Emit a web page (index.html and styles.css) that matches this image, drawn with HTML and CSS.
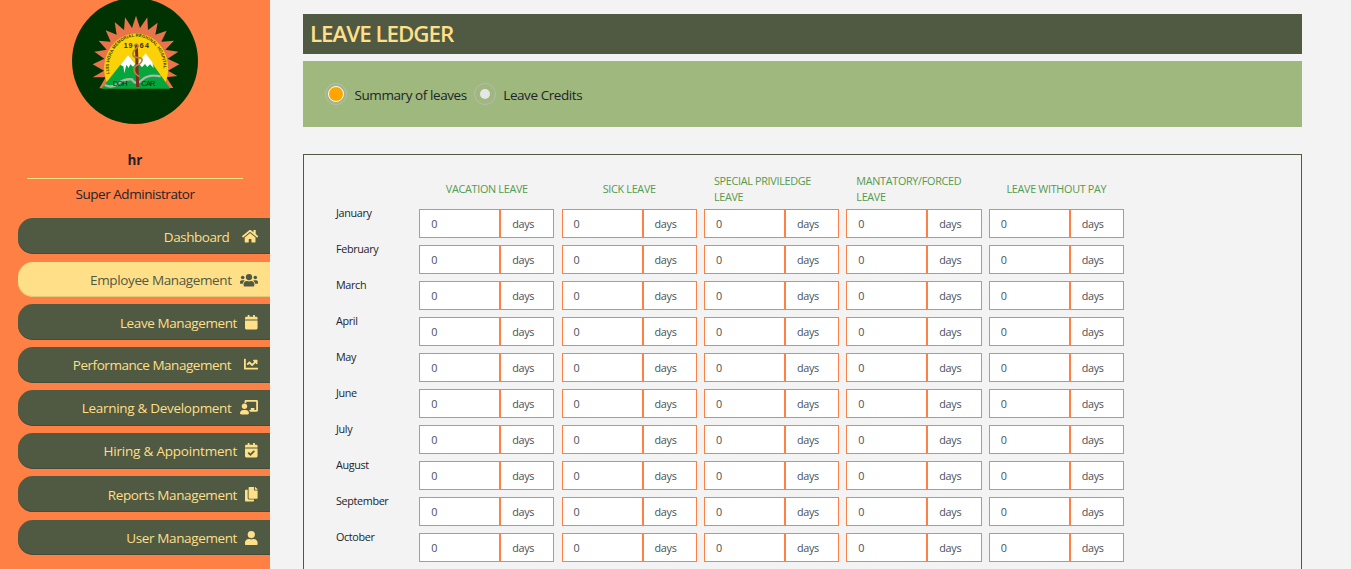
FILE: index.html
```html
<!DOCTYPE html>
<html lang="en">
<head>
<meta charset="utf-8">
<title>Leave Ledger</title>
<link rel="stylesheet" href="styles.css">
</head>
<body>
<div class="app">
  <aside class="sidebar">
    <svg class="logo" viewBox="36 -6 378 378" aria-label="Hospital logo">
      <defs><path id="arc" d="M148 222A82 94 0 1 1 309 222"/></defs>
      <circle cx="225" cy="183" r="189" fill="#003301"/>
      <path fill="#e9734a" d="M118 265L137 232 98 232 132 212 98 193 133 176 103 155 140 149 116 122 152 125 137 91 170 104 164 66 192 90 195 52 216 84 228 47 240 84 262 52 264 90 293 68 286 104 320 92 304 125 342 122 316 149 355 155 323 176 358 193 324 212 352 228 319 232 340 264Z"/>
      <path fill="#fbd108" d="M140 246A96 105 0 1 1 317 246Z"/>
      <path fill="#06a63c" d="M124 266L204 166 229 196 257 163 331 266Z"/>
      <path fill="#fff" d="M181 195L204 165 226 192 219 200 211 193 206 204 199 194 193 220 190 199ZM232 190L257 160 277 187 281 204 270 193 262 201 255 192 246 202 240 195Z"/>
      <path fill="none" stroke="#a9b8a7" stroke-width="7" d="M134 255Q157 266 174 251T216 238Q228 258 246 240T302 229"/>
      <path fill="none" stroke="#7a2b24" stroke-width="9" d="M229 133L233 261"/>
      <path fill="none" stroke="#ad873c" stroke-width="5" d="M222 139Q230 125 235 139L222 152Q212 172 234 173T239 192Q221 198 222 210T239 230"/>
      <text class="logo-year" x="191" y="145" textLength="26">19</text><text class="logo-year" x="239" y="145" textLength="28">64</text>
      <text class="logo-doh" x="158" y="257" textLength="45">DOH</text><text class="logo-doh" x="244" y="257" textLength="42">CAR</text>
      <text class="logo-arc"><textPath href="#arc" textLength="296">LUIS HORA MEMORIAL REGIONAL HOSPITAL</textPath></text>
    </svg>
    <div class="user-name">hr</div>
    <div class="user-role">Super Administrator</div>
    <nav class="menu">
      <a class="item"><span class="t1">Dashboard</span><svg class="ic wide" viewBox="0 0 576 512"><path d="M280 148L96 300v164c0 9 7 16 16 16h112c9 0 16-7 16-16v-96c0-9 7-16 16-16h64c9 0 16 7 16 16v96c0 9 7 16 16 16h112c9 0 16-7 16-16V300L296 148c-5-4-11-4-16 0zM572 251l-84-69V44c0-7-5-12-12-12h-56c-7 0-12 5-12 12v72l-90-74c-18-14-43-14-61 0L4 251c-5 4-5 12-1 17l25 31c5 5 12 6 17 2L280 107c5-4 11-4 16 0l235 194c5 4 12 3 17-2l25-31c5-5 4-13-1-17z"/></svg></a>
      <a class="item item--short active"><span class="t2">Employee Management</span><svg class="ic wide" viewBox="0 0 640 512"><circle cx="96" cy="160" r="64"/><circle cx="544" cy="160" r="64"/><circle cx="320" cy="144" r="112"/><path d="M64 256h64c18 0 34 7 45 19-39 21-64 58-71 109H32c-18 0-32-14-32-32v-32c0-35 29-64 64-64zM576 256h-64c-18 0-34 7-45 19 39 21 64 58 71 109h70c18 0 32-14 32-32v-32c0-35-29-64-64-64zM397 288h-8c-42 21-96 21-138 0h-8c-64 0-115 52-115 115v29c0 27 21 48 48 48h288c27 0 48-21 48-48v-29c0-63-51-115-115-115z"/></svg></a>
      <a class="item"><span class="t3">Leave Management</span><svg class="ic" viewBox="0 0 448 512"><path d="M12 192h424c7 0 12 5 12 12v260c0 27-21 48-48 48H48c-27 0-48-21-48-48V204c0-7 5-12 12-12zM448 148v-36c0-27-21-48-48-48h-48V12c0-7-5-12-12-12h-40c-7 0-12 5-12 12v52H160V12c0-7-5-12-12-12h-40c-7 0-12 5-12 12v52H48c-27 0-48 21-48 48v36c0 7 5 12 12 12h424c7 0 12-5 12-12z"/></svg></a>
      <a class="item item--high"><span class="t4">Performance Management</span><svg class="ic" viewBox="0 0 512 512"><path d="M496 384H64V80c0-9-7-16-16-16H16C7 64 0 71 0 80v336c0 18 14 32 32 32h464c9 0 16-7 16-16v-32c0-9-7-16-16-16zM464 96H346c-22 0-32 26-17 41l32 32-73 73-73-73c-13-13-33-13-46 0l-68 69c-7 6-7 16 0 22l22 23c6 6 16 6 23 0l46-46 73 73c13 13 33 13 46 0l96-96 32 32c15 16 41 5 41-16V112c0-9-7-16-16-16z"/></svg></a>
      <a class="item item--high"><span class="t5">Learning &amp; Development</span><svg class="ic wide" viewBox="0 0 640 512"><path d="M208 352c-2 0-5 0-7 1-27 8-55 8-82 0-2-1-5-1-7-1C50 352 0 402 0 464c0 27 22 48 49 48h222c27 0 49-21 49-48 0-62-50-112-112-112z"/><circle cx="160" cy="224" r="96"/><path d="M592 0H208c-26 0-48 22-48 49v47c23 0 45 7 64 18V64h352v288h-64v-64H384v64h-76c25 16 43 38 53 64h231c26 0 48-22 48-49V49c0-27-22-49-48-49z"/></svg></a>
      <a class="item item--high"><span class="t6">Hiring &amp; Appointment</span><svg class="ic" viewBox="0 0 448 512"><path fill-rule="evenodd" d="M436 160H12c-7 0-12-5-12-12v-36c0-27 21-48 48-48h48V12c0-7 5-12 12-12h40c7 0 12 5 12 12v52h128V12c0-7 5-12 12-12h40c7 0 12 5 12 12v52h48c27 0 48 21 48 48v36c0 7-5 12-12 12zM12 192h424c7 0 12 5 12 12v260c0 27-21 48-48 48H48c-27 0-48-21-48-48V204c0-7 5-12 12-12zM345 296l-28-28c-5-5-12-5-17 0L194 373l-46-46c-5-5-12-5-17 0l-28 28c-5 5-5 12 0 17l82 83c5 5 12 5 17 0l143-142c5-5 5-12 0-17z"/></svg></a>
      <a class="item"><span class="t7">Reports Management</span><svg class="ic" viewBox="0 0 448 512"><path d="M320 448v40c0 13-11 24-24 24H24c-13 0-24-11-24-24V120c0-13 11-24 24-24h72v296c0 31 25 56 56 56zM320 104V0H152c-13 0-24 11-24 24v368c0 13 11 24 24 24h272c13 0 24-11 24-24V128H344c-13 0-24-11-24-24zM441 73L375 7c-5-4-11-7-17-7h-6v96h96v-6c0-6-3-12-7-17z"/></svg></a>
      <a class="item item--short"><span class="t8">User Management</span><svg class="ic" viewBox="0 0 448 512"><circle cx="224" cy="128" r="128"/><path d="M314 288h-17c-45 21-100 21-146 0h-17C60 288 0 348 0 422v42c0 27 22 48 48 48h352c27 0 48-21 48-48v-42c0-74-60-134-134-134z"/></svg></a>
    </nav>
  </aside>
  <main class="content">
    <h1 class="title"><span>LEAVE LEDGER</span></h1>
    <div class="options">
      <span class="radio on"></span><span class="option-label">Summary of leaves</span>
      <span class="radio"></span><span class="option-label">Leave Credits</span>
    </div>
    <section class="ledger">
      <div class="row head">
        <div></div>
        <div>VACATION LEAVE</div>
        <div>SICK LEAVE</div>
        <div class="left"><span>SPECIAL PRIVILEDGE<br>LEAVE</span></div>
        <div class="left"><span>MANTATORY/FORCED<br>LEAVE</span></div>
        <div>LEAVE WITHOUT PAY</div>
      </div>
      <div id="months"></div>
    </section>
  </main>
</div>
<script src="ledger.js"></script>
</body>
</html>
```
FILE: styles.css
```css
* { box-sizing: border-box; }
body { margin: 0; height: 569px; overflow: hidden; background: #f3f3f3; font-family: "Open Sans", "Noto Sans", sans-serif; color: #212529; }
.app { display: flex; height: 569px; overflow: hidden; }
.sidebar { width: 270px; flex: none; background: #ff8044; display: flex; flex-direction: column; align-items: center; overflow: hidden; }
.logo { width: 126px; height: 126px; margin-top: -2px; flex: none; }
.logo-year { font: bold 21px "Liberation Sans", sans-serif; fill: #2c2a0c; }
.logo-doh { font: 22px "Liberation Sans", sans-serif; fill: #06290f; }
.logo-arc { font: bold 13px "Liberation Sans", sans-serif; fill: #413a08; }
.user-name { width: 216px; height: 55px; padding-top: 26px; border-bottom: 1px solid #ffdf88; font-size: 13.5px; line-height: 20px; font-weight: 700; text-align: center; }
.user-role { height: 39px; padding-top: 5px; font-size: 13.5px; line-height: 20px; letter-spacing: -.45px; }
.menu { align-self: stretch; display: flex; flex-direction: column; gap: 7px; padding-left: 18px; }
.item { height: 36px; display: flex; align-items: center; justify-content: flex-end; padding: 1px 12px 0 0; border-radius: 15px 0 0 15px; background: #505a42; box-shadow: inset 0 -1px 0 #454d38; color: #ffdf88; font-size: 13.5px; line-height: 18px; letter-spacing: -.38px; white-space: nowrap; }
.item--short { height: 35px; margin-top: 1px; }
.item--high { padding: 0 12px 1px 0; }
.active { background: #ffdf88; color: #505a42; box-shadow: inset 0 -1px 0 #e3c97c; }
.t1 { letter-spacing: -.45px; margin-right: 4px; }
.t3 { letter-spacing: -.4px; }
.t4 { letter-spacing: -.47px; margin-right: 4px; }
.t5 { letter-spacing: -.3px; }
.t6 { letter-spacing: -.2px; }
.ic { height: 14.4px; width: auto; fill: currentColor; margin-left: 8.4px; }
.content { width: 999px; height: 555px; margin: 14px 0 0 33px; overflow: hidden; flex: none; }
.title { margin: 0; height: 40px; padding-left: 7px; background: #505a42; color: #ffdf88; font-size: 22.4px; line-height: 40px; font-weight: 600; letter-spacing: -1.05px; }
.options { margin-top: 7px; height: 66px; padding-left: 22px; display: flex; align-items: center; background: #9fb87d; font-size: 13.5px; letter-spacing: -.42px; }
.radio { width: 22px; height: 22px; flex: none; border: 1px solid #b9b9b9; border-radius: 50%; display: flex; align-items: center; justify-content: center; }
.radio::before { content: ""; width: 10px; height: 10px; border-radius: 50%; background: #e6e6e6; }
.radio.on::before { width: 14px; height: 14px; background: orange; border: 1px solid #fff; }
.option-label { margin: 2px 7px 0 7.5px; white-space: nowrap; }
.ledger { margin-top: 27px; height: 450px; border: 1px solid #505a42; padding: 18px 0 0 32px; }
.row { display: grid; grid-template-columns: 76.1px repeat(5, 135.35px); column-gap: 7.05px; height: 36px; font-size: 10.8px; }
.head { padding-bottom: 4px; line-height: 16px; color: #569a4c; letter-spacing: -.3px; white-space: nowrap; }
.head > div { display: flex; align-items: center; justify-content: center; }
.head .left { justify-content: flex-start; padding-left: 10px; }
.month { line-height: 16px; margin-top: -4px; letter-spacing: -.35px; }
.group { display: flex; height: 28.8px; line-height: 28px; color: #495057; }
.value, .unit { border: 1px solid #ff8044; background: #fff; padding-left: 11px; }
.value { width: 81px; }
.unit { flex: 1; letter-spacing: -.3px; }
```
FILE: ledger.js
```javascript
const months = ["January", "February", "March", "April", "May", "June", "July", "August", "September", "October"];
const group = '<div class="group"><div class="value">0</div><div class="unit">days</div></div>';
document.getElementById("months").innerHTML = months
  .map((m) => `<div class="row"><div class="month">${m}</div>${group.repeat(5)}</div>`)
  .join("");
```
